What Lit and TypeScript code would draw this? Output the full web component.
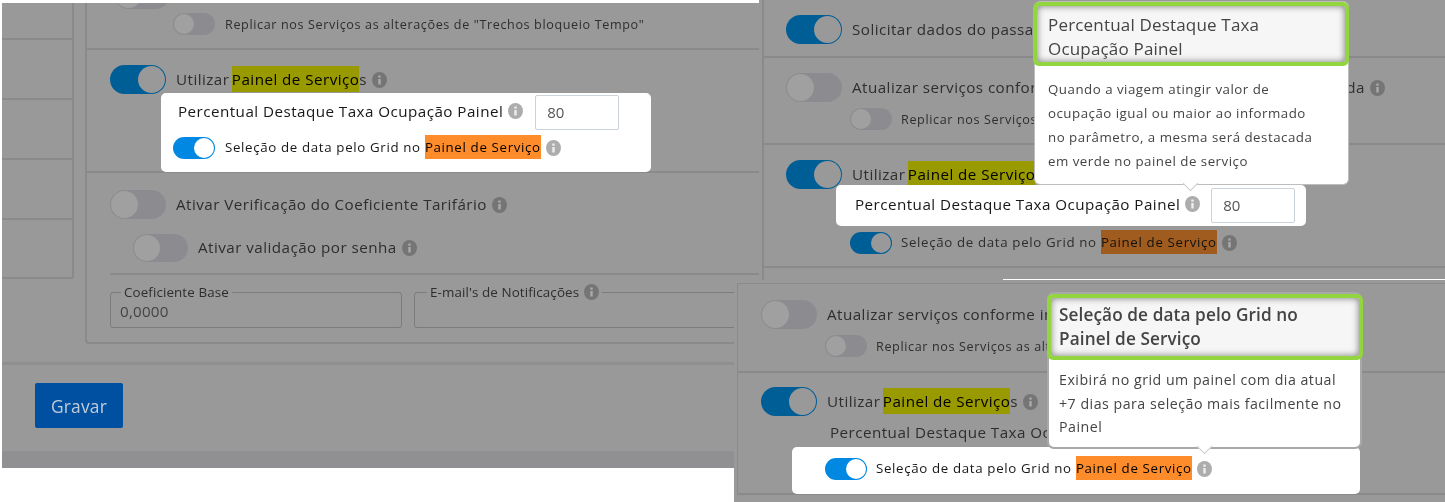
import { LitElement, html, css } from "lit";
import { customElement } from "lit/decorators.js";

const info = (cls = "") => html`<svg class="info ${cls}" viewBox="0 0 15 16"><ellipse cx="7.5" cy="8" rx="7.5" ry="8" fill="currentColor"/><rect x="6.3" y="7" width="2.4" height="5.5" fill="var(--ic, #bbb)"/><rect x="6.3" y="3.5" width="2.4" height="2.2" fill="var(--ic, #bbb)"/></svg>`;
const toggle = (size: string, state: string) => html`<span class="tg ${size} ${state}"><i></i></span>`;
const PAINEL1 = "Painel de Serviço";
const ATUAL = "Atualizar serviços conforme informação alterada no Trecho de Saída";
const REPL = 'Replicar nos Serviços as alterações de "Trechos bloqueio Tempo"';

@customElement("app-root")
export class AppRoot extends LitElement {
  static styles = css`
    :host { display: block; width: 1445px; height: 502px; position: relative; overflow: hidden; background: #fff; font-family: "Open Sans", sans-serif; color: #333; }
    .panel { position: absolute; background: #999; overflow: hidden; filter: blur(0.35px); }
    .p1 { left: 2px; top: 3px; width: 757px; height: 465px; display: flex; flex-direction: column; }
    .p2 { left: 759px; top: 0; width: 686px; height: 280px; }
    .p3 { left: 734px; top: 280px; width: 711px; height: 222px; }
    .edge { position: absolute; left: 1003px; top: 279px; width: 442px; height: 1px; background: #fff; }

    .main { display: flex; height: 341px; flex: none; }
    .side { width: 70px; height: 274px; flex: none; border-right: 2px solid #8a8a8a; border-bottom: 2px solid #8a8a8a; border-bottom-right-radius: 3px; display: flex; flex-direction: column; }
    .side div { height: 58px; border-bottom: 2px solid #8a8a8a; flex: none; }
    .side div:first-child { height: 35px; }
    .card { margin-left: 11px; flex: 1; border-left: 2px solid #8a8a8a; border-bottom: 2px solid #8a8a8a; border-bottom-left-radius: 4px; }
    .sec { border-bottom: 2px solid #8a8a8a; box-sizing: border-box; }
    .sa { height: 47px; padding: 10px 0 0 86px; position: relative; }
    .clip { position: absolute; left: 27px; top: -23px; }
    .sb { height: 123px; padding: 15px 0 0 23px; }
    .sc { padding: 17px 0 0 23px; }
    .validacao { margin: 15px 0 0 23px; }
    .rule { height: 13px; }

    .row { display: flex; align-items: center; white-space: nowrap; font-size: 15.2px; letter-spacing: .46px; color: #2e2e2e; }
    .row:not(.s) > span:not(.tg), .row.sel > span:not(.tg) { padding-bottom: 2px; }
    .row.s { font-size: 12.6px; letter-spacing: .62px; }
    .row.sel { font-size: 13.3px; letter-spacing: .65px; }
    mark { color: #000; padding: 3px 0; }
    mark.y { background: #999900; margin-left: -2px; }
    mark.o { background: #ff8c2a; }
    mark.d { background: #a05c1e; color: #111; }

    .tg { display: inline-block; border-radius: 15px; position: relative; flex: none; background: #8c8c90; margin-right: 10px; }
    .tg i { position: absolute; top: 1px; bottom: 1px; left: 1px; aspect-ratio: 1; border-radius: 50%; background: #a0a0a0; }
    .tg.big { width: 56px; height: 29px; }
    .tg.small { width: 42px; height: 22px; }
    .tg.mid { width: 55px; height: 28px; }
    .tg.on { background: #005e97; }
    .tg.on i { left: auto; right: 1px; background: #999; }
    .tg.lit { background: #0088e2; }
    .tg.lit i { left: auto; right: 1px; background: #fff; }

    .info { width: 15px; height: 16px; color: #757575; flex: none; margin-left: 5px; --ic: #aaa; }
    .info.l { color: #adadad; --ic: #eee; }

    .spot { background: #fff; border-radius: 5px; box-sizing: border-box; position: relative; }
    .s1 { margin: -1px 0 0 51px; width: 490px; height: 79px; padding: 2px 0 0 17px; }
    .s1 .row.s { margin: 7px 0 0 -5px; }
    .field { display: flex; align-items: center; }
    .field .row, .field .info { margin-bottom: 3px; }
    .inp { width: 84px; height: 35px; border: 1px solid #ccd2da; border-radius: 2px; box-sizing: border-box; padding: 6px 11px 0; margin-left: 12px; font-size: 15px; color: #555; }
    .lit-t { color: #181818; }

    .fields { display: flex; gap: 12px; margin-top: 17px; }
    .fs { border: 1px solid #7c7c7c; border-radius: 3px; height: 36px; box-sizing: border-box; position: relative; padding: 8px 0 0 9px; font-size: 15.2px; letter-spacing: .2px; color: #444; }
    .f1 { width: 292px; }
    .f2 { width: 360px; }
    .leg { position: absolute; top: -9px; background: #999; padding: 0 3px; font-size: 13.4px; letter-spacing: .1px; color: #2e2e2e; display: flex; align-items: center; line-height: 16px; white-space: nowrap; }
    .f1 .leg { left: 10px; }
    .f2 .leg { left: 12px; }
    .hr { flex: none; height: 3px; background: #8f8f8f; margin-top: 18px; }
    .foot { flex: 1; padding: 18px 0 0 33px; }
    .btn { width: 88px; height: 45px; background: #0050a2; color: #c3ccd6; border: none; border-radius: 2px; font: 17.4px "Open Sans", sans-serif; letter-spacing: .2px; display: flex; align-items: center; justify-content: center; }
    .strip { flex: none; height: 17px; background: #909093; }

    .c2 { margin-left: 3px; height: 100%; border-left: 2px solid #8a8a8a; }
    .a2 { height: 58px; padding: 15px 0 0 22px; }
    .b2 { height: 87px; padding: 15px 0 0 22px; }
    .c2sec { height: 123px; padding: 15px 0 0 22px; }
    .sub { margin: 6px 0 0 64px; }
    .sub .tg, .after .tg { margin-right: 9px; }
    .s2 { margin: -4px 0 0 50px; width: 470px; height: 41px; padding: 3px 0 0 19px; }
    .s2 .inp { margin-left: 11px; }
    .after { margin: 6px 0 0 64px; }

    .c3 { margin: 3px 0 0 3px; border-left: 1px solid #8a8a8a; border-top: 1px solid #8a8a8a; }
    .a3 { height: 89px; padding: 16px 0 0 23px; }
    .b3 { height: 122px; padding: 14px 0 0 23px; }
    .plain { margin: 6px 0 0 69px; }
    .s3 { margin: 5px 0 0 31px; width: 568px; height: 47px; padding: 11px 0 0 33px; }
    .s3 .tg { margin-right: 9px; }

    .tip { position: absolute; background: #fff; border-radius: 5px; z-index: 2; box-sizing: border-box; }
    .t2 { left: 276px; top: 2px; width: 313px; height: 182px; box-shadow: 0 0 0 1px #bdbdbd; }
    .t3 { left: 315px; top: 14px; width: 311px; height: 153px; box-shadow: 0 0 0 2px #a8a8a8; }
    .head { position: absolute; top: 0; background: #f6f6f6; border: 4px solid #93d53e; border-radius: 6px; box-shadow: inset 0 0 7px #777; box-sizing: border-box; line-height: 24px; color: #444; }
    .t2 .head { left: -2px; right: -1px; height: 64px; font-size: 17px; letter-spacing: .18px; padding: 7px 0 0 11px; }
    .t3 .head { left: -2px; right: -3px; height: 66px; font-size: 17.2px; font-weight: 600; letter-spacing: .1px; padding: 5px 0 0 8px; }
    .body { position: absolute; left: 13px; font-size: 13.3px; line-height: 24px; letter-spacing: .5px; color: #444; white-space: nowrap; }
    .t2 .body { top: 75px; }
    .t3 .body { top: 74px; left: 10px; font-size: 14.2px; line-height: 23.5px; letter-spacing: .5px; }
    .arrow { position: absolute; width: 11px; height: 11px; background: #fff; border-right: 1px solid #ccc; border-bottom: 1px solid #ccc; transform: rotate(45deg); z-index: 3; box-sizing: border-box; }
    .t2 .arrow { left: 150px; top: 176px; }
    .t3 .arrow { left: 150px; top: 147px; }
  `;

  render() {
    const util = html`<span>Utilizar <mark class="y">${PAINEL1}</mark>s</span>`;
    const pct = html`<div class="field"><span class="row lit-t">Percentual Destaque Taxa Ocupação Painel</span>${info("l")}<span class="inp">80</span></div>`;
    return html`
      <section class="panel p1">
        <div class="main">
          <div class="side"><div></div><div></div><div></div><div></div></div>
          <div class="card">
            <div class="sec sa">
              <span class="clip">${toggle("big", "off")}</span>
              <div class="row s">${toggle("small", "off")}<span>${REPL}</span></div>
            </div>
            <div class="sec sb">
              <div class="row">${toggle("big", "on")}${util}${info()}</div>
              <div class="spot s1">
                ${pct}
                <div class="row s sel lit-t">${toggle("small", "lit")}<span>Seleção de data pelo Grid no <mark class="o">${PAINEL1}</mark></span>${info("l")}</div>
              </div>
            </div>
            <div class="sc">
              <div class="row">${toggle("big", "off")}<span>Ativar Verificação do Coeficiente Tarifário</span>${info()}</div>
              <div class="row validacao">${toggle("mid", "off")}<span>Ativar validação por senha</span>${info()}</div>
              <div class="sec rule"></div>
              <div class="fields">
                <div class="fs f1"><span class="leg">Coeficiente Base</span>0,0000</div>
                <div class="fs f2"><span class="leg">E-mail's de Notificações ${info()}</span></div>
              </div>
            </div>
          </div>
        </div>
        <div class="hr"></div>
        <div class="foot"><button class="btn">Gravar</button></div>
        <div class="strip"></div>
      </section>

      <section class="panel p2">
        <div class="c2">
          <div class="sec a2"><div class="row">${toggle("big", "on")}<span>Solicitar dados do passageiro</span>${info()}</div></div>
          <div class="sec b2">
            <div class="row">${toggle("big", "off")}<span>${ATUAL}</span>${info()}</div>
            <div class="row s sub">${toggle("small", "off")}<span>${REPL}</span></div>
          </div>
          <div class="sec c2sec">
            <div class="row">${toggle("big", "on")}${util}${info()}</div>
            <div class="spot s2">${pct}</div>
            <div class="row s sel after">${toggle("small", "on")}<span>Seleção de data pelo Grid no <mark class="d">${PAINEL1}</mark></span>${info()}</div>
          </div>
        </div>
        <div class="tip t2">
          <div class="head">Percentual Destaque Taxa<br />Ocupação Painel</div>
          <div class="body">Quando a viagem atingir valor de<br />ocupação igual ou maior ao informado<br />no parâmetro, a mesma será destacada<br />em verde no painel de serviço</div>
          <span class="arrow"></span>
        </div>
      </section>

      <section class="panel p3">
        <div class="c3">
          <div class="sec a3">
            <div class="row">${toggle("big", "off")}<span>${ATUAL}</span>${info()}</div>
            <div class="row s sub">${toggle("small", "off")}<span>${REPL}</span></div>
          </div>
          <div class="sec b3">
            <div class="row">${toggle("big", "on")}${util}${info()}</div>
            <div class="row plain">Percentual Destaque Taxa Ocupação Painel</div>
            <div class="spot s3"><div class="row s sel lit-t">${toggle("small", "lit")}<span>Seleção de data pelo Grid no <mark class="o">${PAINEL1}</mark></span>${info("l")}</div></div>
          </div>
        </div>
        <div class="tip t3">
          <div class="head">Seleção de data pelo Grid no<br />Painel de Serviço</div>
          <div class="body">Exibirá no grid um painel com dia atual<br />+7 dias para seleção mais facilmente no<br />Painel</div>
          <span class="arrow"></span>
        </div>
      </section>
      <div class="edge"></div>
    `;
  }
}
